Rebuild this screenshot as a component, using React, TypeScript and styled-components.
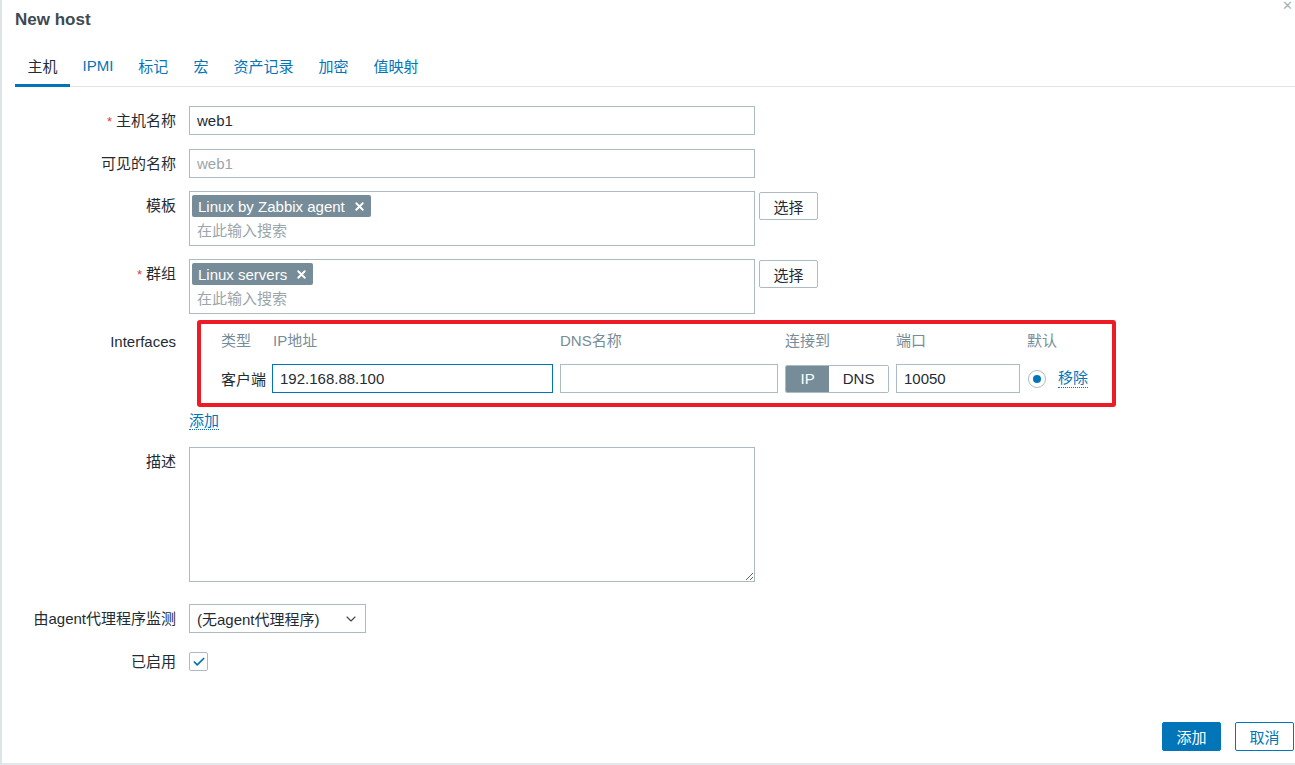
import { createGlobalStyle, styled } from 'styled-components';
import { X, Check, ChevronDown } from 'lucide-react';

const GlobalStyle = createGlobalStyle`
  html, body {
    margin: 0;
    padding: 0;
    background: #ffffff;
    overflow: hidden;
  }
  body {
    font-family: "Liberation Sans", "Noto Sans CJK SC", Arial, sans-serif;
    font-size: 15px;
    color: #1f2c33;
  }
  * {
    box-sizing: border-box;
  }
`;

const Dialog = styled.div`
  width: 1295px;
  height: 765px;
  display: flex;
  flex-direction: column;
  border-left: 2px solid #dde3e6;
  border-bottom: 2px solid #e4e8ea;
`;

const Header = styled.div`
  height: 40px;
  display: flex;
  align-items: center;
  justify-content: space-between;
  padding: 0 2px 0 13px;
`;

const Title = styled.h1`
  margin: 0;
  font-size: 17px;
  font-weight: bold;
  color: #3e4a51;
`;

const CloseBtn = styled.span`
  align-self: flex-start;
  color: #a6b2b8;
  font-size: 13px;
  line-height: 12px;
`;

const TabBar = styled.div`
  margin: 6px 0 0 13px;
  height: 41px;
  display: flex;
  border-bottom: 1px solid #dfe4e7;
`;

const Tab = styled.div<{ $active?: boolean }>`
  padding: 0 12.5px;
  display: flex;
  align-items: center;
  font-size: 15px;
  color: ${(p) => (p.$active ? '#1f2c33' : '#0275b8')};
  border-bottom: 3px solid ${(p) => (p.$active ? '#0275b8' : 'transparent')};
  margin-bottom: -1px;
`;

const Form = styled.div`
  flex: 1;
  padding-top: 19px;
`;

const Row = styled.div<{ $top?: number }>`
  display: grid;
  grid-template-columns: 174px 1fr;
  column-gap: 13px;
  margin-top: ${(p) => p.$top ?? 13}px;
  align-items: start;
`;

const Label = styled.div<{ $pad?: number }>`
  text-align: right;
  line-height: 29px;
  padding-top: ${(p) => p.$pad ?? 0}px;
  white-space: nowrap;
`;

const Required = styled.span`
  color: #e33734;
  margin-right: 4px;
  font-size: 13px;
`;

const Field = styled.div`
  display: flex;
  align-items: flex-start;
  gap: 4px;
`;

const TextInput = styled.input<{ $w: number; $muted?: boolean; $focused?: boolean }>`
  width: ${(p) => p.$w}px;
  height: 29px;
  border: 1px solid ${(p) => (p.$focused ? '#0275b8' : '#acbbc2')};
  border-radius: 0;
  padding: 0 7px;
  font: inherit;
  font-size: 15px;
  color: ${(p) => (p.$muted ? '#9aa6ac' : '#1f2c33')};
  background: #fff;
  outline: none;
`;

const MultiSelect = styled.div`
  width: 566px;
  height: 55px;
  border: 1px solid #acbbc2;
  padding: 3px 2px;
  display: flex;
  flex-direction: column;
  gap: 3px;
`;

const TagList = styled.div`
  display: flex;
`;

const Tag = styled.span`
  height: 22px;
  display: inline-flex;
  align-items: center;
  gap: 8px;
  padding: 0 5px 0 6px;
  background: #768d99;
  color: #fff;
  border-radius: 2px;
  font-size: 15px;
`;

const Placeholder = styled.span`
  padding-left: 5px;
  color: #9aa6ac;
  line-height: 22px;
`;

const Button = styled.button<{ $kind?: 'primary' | 'outline' | 'plain' }>`
  height: 29px;
  padding: 0 14px;
  font: inherit;
  font-size: 15px;
  border-radius: 2px;
  cursor: pointer;
  background: ${(p) => (p.$kind === 'primary' ? '#0275b8' : '#fff')};
  color: ${(p) => (p.$kind === 'primary' ? '#fff' : p.$kind === 'outline' ? '#0275b8' : '#1f2c33')};
  border: 1px solid ${(p) => (p.$kind === 'plain' || !p.$kind ? '#acbbc2' : '#0275b8')};
`;

const SelectButton = styled(Button)`
  margin-top: 1px;
  width: 59px;
  height: 28px;
  padding: 0;
`;

const InterfaceBox = styled.div`
  margin-left: 8px;
  width: 919px;
  border: 4px solid #ed1c24;
  border-radius: 3px;
  padding: 7px 0 10px 20px;
`;

const IfGrid = styled.div`
  display: grid;
  grid-template-columns: 44px 281px 218px 104px 124px auto;
  column-gap: 7px;
  row-gap: 13px;
  align-items: center;
`;

const ColHead = styled.div<{ $indent?: number }>`
  color: #768d99;
  line-height: 20px;
  white-space: nowrap;
  padding-left: ${(p) => p.$indent ?? 0}px;
`;

const CellText = styled.div`
  white-space: nowrap;
`;

const Toggle = styled.div`
  display: flex;
  height: 28px;
  border: 1px solid #acbbc2;
  border-radius: 2px;
  overflow: hidden;
`;

const ToggleItem = styled.span<{ $on?: boolean; $w: number }>`
  width: ${(p) => p.$w}px;
  display: flex;
  align-items: center;
  justify-content: center;
  background: ${(p) => (p.$on ? '#768d99' : '#fff')};
  color: ${(p) => (p.$on ? '#fff' : '#1f2c33')};
`;

const DefaultCell = styled.div`
  display: flex;
  align-items: center;
  gap: 12px;
  padding-left: 1px;
`;

const Radio = styled.span`
  width: 18px;
  height: 18px;
  border: 1px solid #acbbc2;
  border-radius: 50%;
  display: flex;
  align-items: center;
  justify-content: center;
  &::after {
    content: '';
    width: 8px;
    height: 8px;
    border-radius: 50%;
    background: #0275b8;
  }
`;

const LinkText = styled.a`
  color: #0275b8;
  text-decoration: none;
  border-bottom: 1px dotted #0275b8;
  line-height: 18px;
  cursor: pointer;
`;

const AddLink = styled.div`
  margin-top: 4px;
  line-height: 20px;
`;

const TextArea = styled.textarea`
  width: 566px;
  height: 135px;
  border: 1px solid #acbbc2;
  border-radius: 0;
  font: inherit;
  resize: both;
  outline: none;
  display: block;
`;

const Dropdown = styled.div`
  width: 177px;
  height: 29px;
  border: 1px solid #acbbc2;
  display: flex;
  align-items: center;
  justify-content: space-between;
  padding: 0 6px 0 7px;
  color: #1f2c33;
`;

const CheckBox = styled.span`
  width: 19px;
  height: 19px;
  border: 1px solid #acbbc2;
  border-radius: 2px;
  display: flex;
  align-items: center;
  justify-content: center;
  margin-top: 5px;
  color: #0275b8;
`;

const Footer = styled.div`
  display: flex;
  justify-content: flex-end;
  gap: 14px;
  padding: 0 1px 12px 0;
`;

const FooterButton = styled(Button)`
  width: 59px;
  padding: 0;
`;

const App = () => {
  return (
    <>
      <GlobalStyle />
      <Dialog>
        <Header>
          <Title>New host</Title>
          <CloseBtn>✕</CloseBtn>
        </Header>
        <TabBar>
          <Tab $active>主机</Tab>
          <Tab>IPMI</Tab>
          <Tab>标记</Tab>
          <Tab>宏</Tab>
          <Tab>资产记录</Tab>
          <Tab>加密</Tab>
          <Tab>值映射</Tab>
        </TabBar>

        <Form>
          <Row $top={0}>
            <Label>
              <Required>*</Required>主机名称
            </Label>
            <Field>
              <TextInput $w={566} value="web1" readOnly />
            </Field>
          </Row>
          <Row>
            <Label>可见的名称</Label>
            <Field>
              <TextInput $w={566} $muted value="web1" readOnly />
            </Field>
          </Row>
          <Row>
            <Label>模板</Label>
            <Field>
              <MultiSelect>
                <TagList>
                  <Tag>
                    Linux by Zabbix agent
                    <X size={13} strokeWidth={3.5} />
                  </Tag>
                </TagList>
                <Placeholder>在此输入搜索</Placeholder>
              </MultiSelect>
              <SelectButton>选择</SelectButton>
            </Field>
          </Row>
          <Row>
            <Label>
              <Required>*</Required>群组
            </Label>
            <Field>
              <MultiSelect>
                <TagList>
                  <Tag>
                    Linux servers
                    <X size={13} strokeWidth={3.5} />
                  </Tag>
                </TagList>
                <Placeholder>在此输入搜索</Placeholder>
              </MultiSelect>
              <SelectButton>选择</SelectButton>
            </Field>
          </Row>
          <Row $top={6}>
            <Label $pad={7}>Interfaces</Label>
            <div>
              <InterfaceBox>
                <IfGrid>
                  <ColHead>类型</ColHead>
                  <ColHead $indent={1}>IP地址</ColHead>
                  <ColHead>DNS名称</ColHead>
                  <ColHead>连接到</ColHead>
                  <ColHead>端口</ColHead>
                  <ColHead>默认</ColHead>

                  <CellText>客户端</CellText>
                  <TextInput $w={281} $focused value="192.168.88.100" readOnly />
                  <TextInput $w={218} value="" readOnly />
                  <Toggle>
                    <ToggleItem $on $w={44}>IP</ToggleItem>
                    <ToggleItem $w={60}>DNS</ToggleItem>
                  </Toggle>
                  <TextInput $w={124} value="10050" readOnly />
                  <DefaultCell>
                    <Radio />
                    <LinkText>移除</LinkText>
                  </DefaultCell>
                </IfGrid>
              </InterfaceBox>
              <AddLink>
                <LinkText>添加</LinkText>
              </AddLink>
            </div>
          </Row>
          <Row $top={16}>
            <Label>描述</Label>
            <Field>
              <TextArea />
            </Field>
          </Row>
          <Row $top={22}>
            <Label>由agent代理程序监测</Label>
            <Field>
              <Dropdown>
                <span>(无agent代理程序)</span>
                <ChevronDown size={16} strokeWidth={1.6} color="#3a474e" />
              </Dropdown>
            </Field>
          </Row>
          <Row $top={14}>
            <Label>已启用</Label>
            <Field>
              <CheckBox>
                <Check size={14} strokeWidth={3} />
              </CheckBox>
            </Field>
          </Row>
        </Form>

        <Footer>
          <FooterButton $kind="primary">添加</FooterButton>
          <FooterButton $kind="outline">取消</FooterButton>
        </Footer>
      </Dialog>
    </>
  );
};

export default App;
